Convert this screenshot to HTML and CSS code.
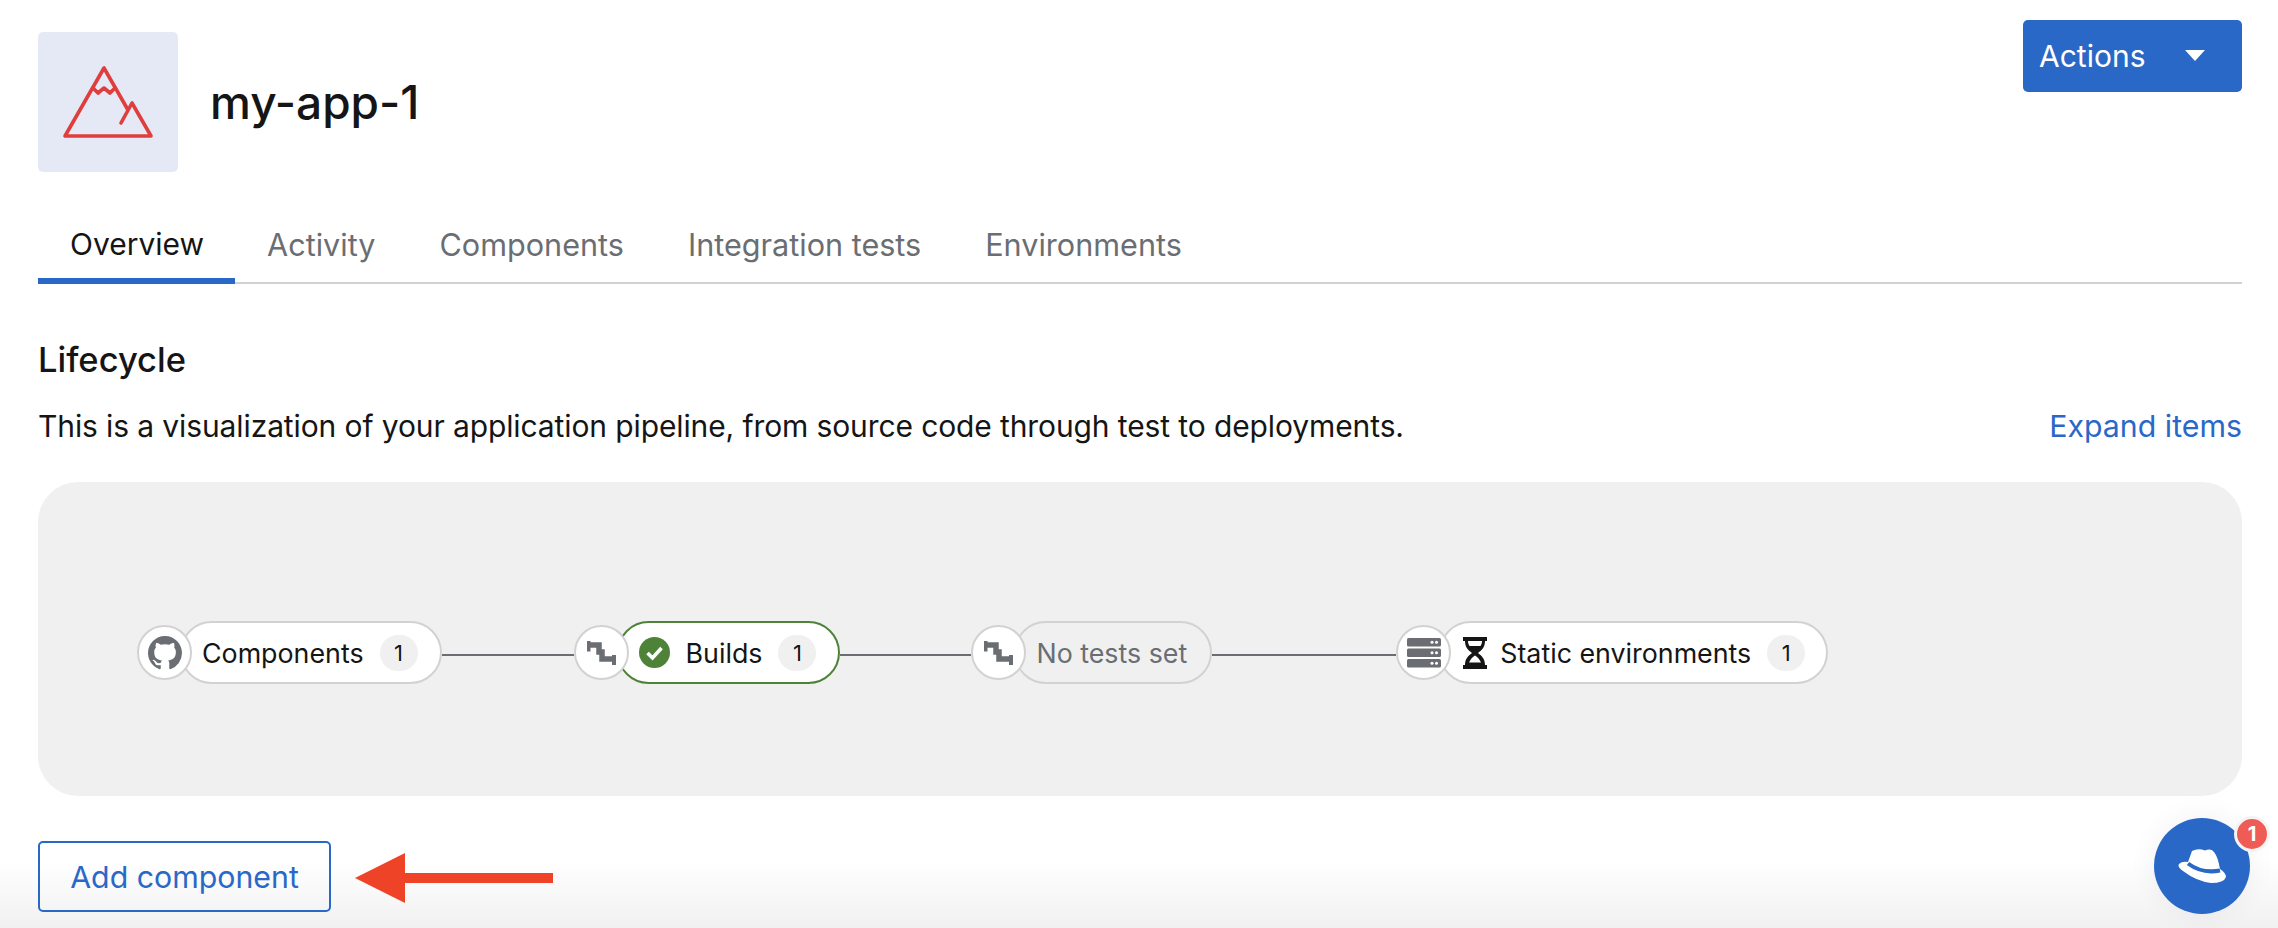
FILE: index.html
```html
<!DOCTYPE html>
<html lang="en">
<head>
  <meta charset="UTF-8">
  <title>my-app-1</title>
  <link rel="stylesheet" href="styles.css">
</head>
<body>
  <div class="page">
    <div class="page-header">
      <div class="app-title">
        <div class="app-icon">
          <svg width="140" height="140" viewBox="0 0 140 140" fill="none" stroke="#e03d3d" stroke-width="3.6" stroke-linejoin="round" stroke-linecap="round">
            <path d="M90 78 L66 36 L27 104 H113 L94 71 L83 91"/>
            <path d="M55 56 L60 61 L66 56 L72 61 L77 56"/>
          </svg>
        </div>
        <h1>my-app-1</h1>
      </div>
      <button class="btn-primary">
        Actions
        <svg class="caret" width="20" height="12" viewBox="0 0 20 12"><path d="M0 0 H20 L10 11 Z" fill="#fff"/></svg>
      </button>
    </div>

    <div class="tabs">
      <div class="tab active">Overview</div>
      <div class="tab">Activity</div>
      <div class="tab">Components</div>
      <div class="tab">Integration tests</div>
      <div class="tab">Environments</div>
    </div>

    <h2>Lifecycle</h2>
    <div class="desc-row">
      <p>This is a visualization of your application pipeline, from source code through test to deployments.</p>
      <a class="link">Expand items</a>
    </div>

    <div class="panel">
      <div class="node">
        <div class="node-icon">
          <svg width="34" height="34" viewBox="0 0 16 16"><path fill="#6a6e73" d="M8 0C3.58 0 0 3.58 0 8c0 3.54 2.29 6.53 5.47 7.59.4.07.55-.17.55-.38 0-.19-.01-.82-.01-1.49-2.01.37-2.53-.49-2.69-.94-.09-.23-.48-.94-.82-1.13-.28-.15-.68-.52-.01-.53.63-.01 1.08.58 1.23.82.72 1.21 1.87.87 2.33.66.07-.52.28-.87.51-1.07-1.78-.2-3.64-.89-3.64-3.95 0-.87.31-1.59.82-2.15-.08-.2-.36-1.02.08-2.12 0 0 .67-.21 2.2.82.64-.18 1.32-.27 2-.27.68 0 1.36.09 2 .27 1.53-1.04 2.2-.82 2.2-.82.44 1.1.16 1.92.08 2.12.51.56.82 1.27.82 2.15 0 3.07-1.87 3.75-3.65 3.95.29.25.54.73.54 1.48 0 1.07-.01 1.93-.01 2.2 0 .21.15.46.55.38A8.013 8.013 0 0016 8c0-4.42-3.58-8-8-8z"/></svg>
        </div>
        <div class="pill">Components <span class="count">1</span></div>
      </div>
      <div class="line line-a"></div>
      <div class="node">
        <div class="node-icon">
          <svg width="29" height="24" viewBox="0 0 29 24" fill="#6a6e73"><path d="M0 4 H12 V11 H15 V18 H29" fill="none" stroke="#6a6e73" stroke-width="5.500"/><rect width="3.500" height="10.500"/><rect x="25" y="14" width="4" height="10"/></svg>
        </div>
        <div class="pill pill-success">
          <svg class="pill-icon" width="31" height="31" viewBox="0 0 31 31"><circle cx="15.5" cy="15.5" r="15.5" fill="#4f8239"/><path d="M8.5 16 L13.5 21 L22.5 11" fill="none" stroke="#fff" stroke-width="3.6"/></svg>
          Builds <span class="count">1</span>
        </div>
      </div>
      <div class="line line-b"></div>
      <div class="node">
        <div class="node-icon">
          <svg width="29" height="24" viewBox="0 0 29 24" fill="#6a6e73"><path d="M0 4 H12 V11 H15 V18 H29" fill="none" stroke="#6a6e73" stroke-width="5.500"/><rect width="3.500" height="10.500"/><rect x="25" y="14" width="4" height="10"/></svg>
        </div>
        <div class="pill pill-empty">No tests set</div>
      </div>
      <div class="line line-c"></div>
      <div class="node">
        <div class="node-icon">
          <svg width="34" height="30" viewBox="0 0 34 30">
            <rect y="0" width="34" height="8.5" rx="1.5" fill="#6a6e73"/>
            <rect y="10.5" width="34" height="8.5" rx="1.5" fill="#6a6e73"/>
            <rect y="21" width="34" height="8.5" rx="1.5" fill="#6a6e73"/>
            <g fill="#fff">
              <circle cx="25" cy="4.2" r="1.5"/><circle cx="29.5" cy="4.2" r="1.5"/>
              <circle cx="25" cy="14.7" r="1.5"/><circle cx="29.5" cy="14.7" r="1.5"/>
              <circle cx="25" cy="25.2" r="1.5"/><circle cx="29.5" cy="25.2" r="1.5"/>
            </g>
          </svg>
        </div>
        <div class="pill pill-env">
          <svg class="pill-icon" width="24" height="32" viewBox="0 0 24 32"><path fill="#151515" d="M0 0 H24 V4 H22 C22 10 19 13 15 16 C19 19 22 22 22 28 H24 V32 H0 V28 H2 C2 22 5 19 9 16 C5 13 2 10 2 4 H0 Z"/><path fill="#fff" d="M5 4 H19 C19 6 18.500 7.500 17.500 9 H6.500 C5.500 7.500 5 6 5 4 Z M12 18.500 C9 20.500 7 23 6 25.500 H18 C17 23 15 20.500 12 18.500 Z"/></svg>
          Static environments <span class="count">1</span>
        </div>
      </div>
    </div>

    <div class="actions-row">
      <button class="btn-secondary">Add component</button>
    </div>
  </div>

  <svg class="callout-arrow" width="198" height="50" viewBox="0 0 198 50"><path fill="#ee4326" d="M0 25 L50 0 V20 H198 V30 H50 V50 Z"/></svg>

  <div class="chat-button">
    <svg width="48" height="36" viewBox="0 0 48 36">
      <path fill="#fff" d="M10 14 L14 3 Q20 0 27 2.500 Q33 0 36 4 Q40 9 42 21 Q48 25 48 29 Q46 35 33 35 Q18 33 5 23 Q-1 19 1 16 Q4 13 10 14 Z"/>
      <path fill="none" stroke="#2a68c8" stroke-width="4" d="M10 15.500 Q24 26 42 22.500"/>
    </svg>
    <span class="chat-badge">1</span>
  </div>
</body>
</html>
```

FILE: styles.css
```css
html {
  background: linear-gradient(#ffffff 860px, #f1f1f1 928px);
  height: 928px;
}

body {
  font-family: 'Inter', sans-serif;
  color: #151515;
  margin: 0;
  height: 928px;
  overflow: hidden;
}

.page {
  padding: 20px 36px 0 38px;
}

.page-header {
  display: flex;
  justify-content: space-between;
  align-items: flex-start;
}

.app-title {
  display: flex;
  align-items: center;
  gap: 32px;
  margin-top: 12px;
}

.app-icon {
  width: 140px;
  height: 140px;
  background: #e4e9f5;
  border-radius: 5px;
}

.app-icon svg {
  display: block;
}

h1 {
  font-size: 46px;
  font-weight: 500;
  margin: 0;
}

.btn-primary {
  display: flex;
  align-items: center;
  width: 219px;
  height: 72px;
  padding: 0 16px;
  background: #2a68c8;
  color: #ffffff;
  font-family: inherit;
  font-size: 30px;
  border: none;
  border-radius: 5px;
}

.caret {
  margin-left: 40px;
}

.tabs {
  display: flex;
  margin-top: 32px;
  height: 78px;
  border-bottom: 2px solid #d2d2d2;
  font-size: 30.6px;
  color: #6a6e73;
}

.tab {
  box-sizing: border-box;
  padding: 22px 32px 0;
  height: 80px;
}

.tab.active {
  padding: 22px 31px 0 32px;
  color: #151515;
  font-size: 30px;
  border-bottom: 6px solid #2a68c8;
}

h2 {
  font-size: 34.5px;
  font-weight: 500;
  margin: 56px 0 0;
  line-height: 40px;
}

.desc-row {
  display: flex;
  justify-content: space-between;
  align-items: center;
  margin-top: 26px;
  font-size: 30px;
  line-height: 40px;
}

.desc-row p {
  margin: 0;
  letter-spacing: -0.11px;
}

.link {
  color: #2a68c8;
  font-size: 30.3px;
}

.panel {
  display: flex;
  align-items: center;
  box-sizing: border-box;
  height: 314px;
  margin-top: 36px;
  padding: 27px 0 0 99px;
  background: #f0f0f0;
  border-radius: 40px;
}

.node {
  display: flex;
  align-items: center;
}

.node-icon {
  display: flex;
  align-items: center;
  justify-content: center;
  position: relative;
  z-index: 1;
  box-sizing: border-box;
  width: 55px;
  height: 55px;
  background: #ffffff;
  border: 2px solid #d2d2d2;
  border-radius: 50%;
}

.pill {
  display: flex;
  align-items: center;
  box-sizing: border-box;
  height: 63px;
  margin-left: -12px;
  padding: 0 22px 0 20px;
  background: #ffffff;
  border: 2px solid #d2d2d2;
  border-radius: 32px;
  font-size: 26.8px;
  white-space: nowrap;
}

.pill-success {
  border-color: #4f8239;
}

.pill-empty {
  padding-right: 23px;
  background: #f0f0f0;
  color: #6a6e73;
}

.pill-env {
  padding: 0 21px 0 22px;
}

.pill-icon {
  margin-right: 16px;
}

.pill-env .pill-icon {
  margin-right: 13px;
}

.count {
  display: flex;
  align-items: center;
  justify-content: center;
  width: 38px;
  height: 36px;
  margin-left: 16px;
  background: #f0f0f0;
  border-radius: 18px;
  font-size: 22px;
}

.line {
  height: 2px;
  margin-top: 4px;
  background: #6a6e73;
}

.line-a { width: 132px; }
.line-b { width: 131px; }
.line-c { width: 184px; }

.actions-row {
  margin-top: 45px;
}

.btn-secondary {
  display: block;
  width: 293px;
  height: 71px;
  background: transparent;
  color: #2a68c8;
  font-family: inherit;
  font-size: 30.3px;
  border: 2px solid #2a68c8;
  border-radius: 5px;
}

.callout-arrow {
  position: absolute;
  left: 355px;
  top: 853px;
}

.chat-button {
  position: absolute;
  left: 2154px;
  top: 818px;
  display: flex;
  align-items: center;
  justify-content: center;
  width: 96px;
  height: 96px;
  background: #2a68c8;
  border-radius: 50%;
  box-shadow: 0 0 30px rgba(0, 0, 0, 0.06);
}

.chat-badge {
  position: absolute;
  left: 80px;
  top: -2px;
  width: 36px;
  height: 36px;
  box-sizing: border-box;
  border: 3px solid #f4f4f4;
  border-radius: 50%;
  background: #ef5b55;
  color: #ffffff;
  font-size: 20px;
  font-weight: 700;
  line-height: 30px;
  text-align: center;
}
```
